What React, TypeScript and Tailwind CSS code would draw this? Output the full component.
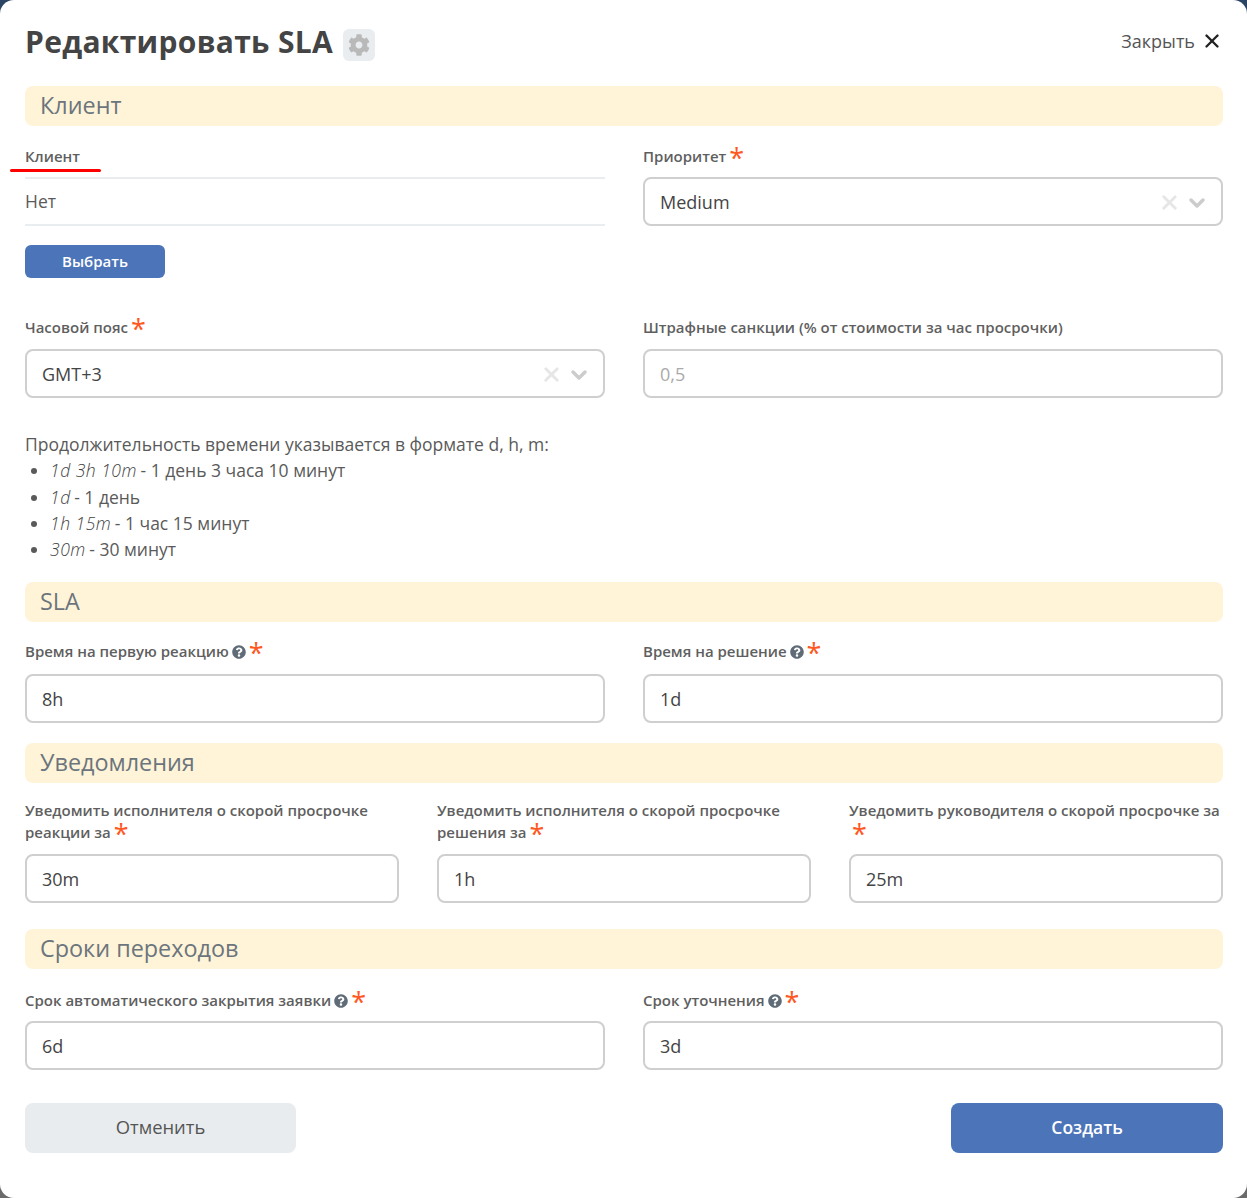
import React from 'react';
import { ChevronDown, X } from 'lucide-react';

function Star() {
  return <span className="ml-[3px] text-[27px] leading-[14px] font-normal text-[#ff5722] align-[-6px]">*</span>;
}

function Help() {
  return (
    <svg viewBox="0 0 512 512" className="inline-block w-[14px] h-[14px] ml-[3px] align-[-2px] fill-[#5f6b76]">
      <path d="M504 256c0 137-111 248-248 248S8 393 8 256C8 119 119 8 256 8s248 111 248 248zM262.700 90c-54.500 0-89.300 23-116.500 63.800-3.500 5.300-2.400 12.400 2.700 16.300l34.700 26.300c5.200 3.900 12.600 3 16.700-2.100 17.900-22.700 30.100-35.800 57.300-35.800 20.400 0 45.700 13.100 45.700 32.900 0 15-12.400 22.700-32.500 34-23.500 13.200-54.600 29.600-54.600 70.600V302c0 6.600 5.400 12 12 12h56c6.600 0 12-5.400 12-12v-1.300c0-28.500 83.200-29.600 83.200-106.700 0-58-60.200-102-116.700-102zM256 338c-25.400 0-46 20.600-46 46 0 25.400 20.600 46 46 46s46-20.600 46-46c0-25.400-20.600-46-46-46z" />
    </svg>
  );
}

function Label({ children }: { children: React.ReactNode }) {
  return <label className="block -mt-px text-[15px] leading-[22px] font-semibold text-[#5f5f5f]">{children}</label>;
}

function TextField({ value, disabled, className }: { value: string; disabled?: boolean; className?: string }) {
  return (
    <div className={`h-[49px] flex items-center px-[15px] pt-[2px] border-2 border-[#cfcfcf] rounded-[8px] bg-white text-[18px] ${disabled ? 'text-[#aaa]' : 'text-[#444]'} ${className ?? 'mt-[10px]'}`}>
      {value}
    </div>
  );
}

function SelectField({ value, className }: { value: string; className?: string }) {
  return (
    <div className={`h-[49px] flex items-center justify-between pl-[15px] pr-[6px] pt-[2px] border-2 border-[#cfcfcf] rounded-[8px] bg-white text-[18px] text-[#444] ${className ?? 'mt-[10px]'}`}>
      {value}
      <div className="flex items-center gap-[4px] pr-[6px]">
        <X size={23} strokeWidth={3} className="text-[#e6e6e6]" />
        <ChevronDown size={24} strokeWidth={3.5} className="text-[#ccc]" />
      </div>
    </div>
  );
}

function Section({ title, className }: { title: string; className?: string }) {
  return (
    <div className={`h-[40px] flex items-center px-[15px] pb-[1px] rounded-[8px] bg-[#fff4d8] text-[23.400px] text-[#6c757d] ${className ?? ''}`}>
      {title}
    </div>
  );
}

export default function App() {
  return (
    <div className="w-[1247px] h-[1198px] bg-linear-to-b from-[#2c4464] to-[#6b6b6b]" style={{ fontFamily: '"Open Sans", sans-serif' }}>
      <div className="h-full rounded-[14px] bg-white pl-[25px] pr-[24px] pt-[24px]">
        {/* header */}
        <div className="h-[36px] flex items-center justify-between">
          <div className="flex items-center">
            <h1 className="text-[30px] leading-[36px] font-bold text-[#444] tracking-[0.3px]">Редактировать SLA</h1>
            <div className="ml-[10px] mt-[6px] w-[32px] h-[32px] flex items-center justify-center rounded-[6px] bg-[#e9edef]">
              <svg viewBox="0 0 512 512" className="w-[22px] h-[22px] fill-[#b9b9b9]">
                <path d="M487.400 315.700l-42.600-24.600c4.300-23.200 4.300-47 0-70.200l42.600-24.600c4.900-2.800 7.100-8.600 5.500-14-11.100-35.600-30-67.800-54.700-94.600-3.800-4.100-10-5.100-14.800-2.300L380.800 110c-17.900-15.400-38.500-27.300-60.800-35.100V25.800c0-5.600-3.900-10.500-9.400-11.700-36.700-8.200-74.300-7.800-109.200 0-5.500 1.200-9.400 6.100-9.400 11.700V75c-22.200 7.900-42.800 19.800-60.800 35.100L88.700 85.500c-4.900-2.800-11-1.900-14.800 2.300-24.700 26.700-43.600 58.900-54.700 94.600-1.700 5.400.6 11.200 5.500 14L67.300 221c-4.300 23.200-4.300 47 0 70.200l-42.600 24.600c-4.900 2.800-7.100 8.600-5.500 14 11.100 35.600 30 67.800 54.700 94.600 3.800 4.100 10 5.100 14.800 2.300l42.600-24.600c17.900 15.400 38.500 27.300 60.800 35.100v49.200c0 5.600 3.900 10.500 9.400 11.700 36.700 8.200 74.300 7.800 109.200 0 5.500-1.200 9.400-6.100 9.400-11.700v-49.200c22.200-7.900 42.800-19.800 60.800-35.100l42.600 24.600c4.900 2.800 11 1.900 14.800-2.300 24.700-26.700 43.600-58.900 54.700-94.600 1.500-5.500-.7-11.300-5.600-14.100zM256 336c-44.100 0-80-35.900-80-80s35.900-80 80-80 80 35.900 80 80-35.900 80-80 80z" />
              </svg>
            </div>
          </div>
          <div className="flex items-center gap-[6px] pb-[2px] text-[18px] text-[#555]">
            Закрыть
            <X size={22} strokeWidth={2.6} className="text-[#222]" />
          </div>
        </div>

        <Section title="Клиент" className="mt-[26px]" />

        <div className="mt-[20px] grid grid-cols-2 gap-x-[38px]">
          <div>
            <div className="relative">
              <Label>Клиент</Label>
              <div className="absolute left-[-15px] top-[24px] w-[91px] h-[3px] rounded-full bg-[#f00]" />
            </div>
            <div className="mt-[10px] h-[49px] flex items-center border-y-2 border-[#e9edef] text-[17.500px] text-[#5a5a5a]">Нет</div>
            <button className="mt-[19px] w-[140px] h-[33px] rounded-[6px] bg-[#4c74b9] text-[15px] font-semibold text-white">Выбрать</button>
          </div>
          <div>
            <Label>Приоритет<Star /></Label>
            <SelectField value="Medium" />
          </div>
        </div>

        <div className="mt-[39px] grid grid-cols-2 gap-x-[38px]">
          <div>
            <Label>Часовой пояс<Star /></Label>
            <SelectField value="GMT+3" className="mt-[11px]" />
          </div>
          <div>
            <Label>Штрафные санкции (% от стоимости за час просрочки)</Label>
            <TextField value="0,5" disabled className="mt-[11px]" />
          </div>
        </div>

        <div className="mt-[33px] text-[17.500px] leading-[26.250px] text-[#5a5a5a]">
          <div>Продолжительность времени указывается в формате d, h, m:</div>
          <ul className="list-disc pl-[25px]">
            <li><em className="font-light tracking-[0.5px] mr-[-1px] text-[#444]">1d 3h 10m</em> - 1 день 3 часа 10 минут</li>
            <li><em className="font-light tracking-[0.5px] mr-[-1px] text-[#444]">1d</em> - 1 день</li>
            <li><em className="font-light tracking-[0.5px] mr-[-1px] text-[#444]">1h 15m</em> - 1 час 15 минут</li>
            <li><em className="font-light tracking-[0.5px] mr-[-1px] text-[#444]">30m</em> - 30 минут</li>
          </ul>
        </div>

        <Section title="SLA" className="mt-[20px]" />

        <div className="mt-[19px] grid grid-cols-2 gap-x-[38px]">
          <div>
            <Label>Время на первую реакцию<Help /><Star /></Label>
            <TextField value="8h" className="mt-[12px]" />
          </div>
          <div>
            <Label>Время на решение<Help /><Star /></Label>
            <TextField value="1d" className="mt-[12px]" />
          </div>
        </div>

        <Section title="Уведомления" className="mt-[20px]" />

        <div className="mt-[17px] grid grid-cols-3 gap-x-[38px]">
          <div>
            <Label>Уведомить исполнителя о скорой просрочке реакции за<Star /></Label>
            <TextField value="30m" className="mt-[11px]" />
          </div>
          <div>
            <Label>Уведомить исполнителя о скорой просрочке решения за<Star /></Label>
            <TextField value="1h" className="mt-[11px]" />
          </div>
          <div>
            <Label>Уведомить руководителя о скорой просрочке за <Star /></Label>
            <TextField value="25m" className="mt-[11px]" />
          </div>
        </div>

        <Section title="Сроки переходов" className="mt-[26px]" />

        <div className="mt-[21px] grid grid-cols-2 gap-x-[38px]">
          <div>
            <Label>Срок автоматического закрытия заявки<Help /><Star /></Label>
            <TextField value="6d" />
          </div>
          <div>
            <Label>Срок уточнения<Help /><Star /></Label>
            <TextField value="3d" />
          </div>
        </div>

        <div className="mt-[33px] flex justify-between">
          <button className="w-[271px] h-[50px] pb-[2px] rounded-[8px] bg-[#e8ecee] text-[18.400px] text-[#555]">Отменить</button>
          <button className="w-[272px] h-[50px] pb-[2px] rounded-[8px] bg-[#4c74b9] text-[17.500px] font-semibold text-white">Создать</button>
        </div>
      </div>
    </div>
  );
}
